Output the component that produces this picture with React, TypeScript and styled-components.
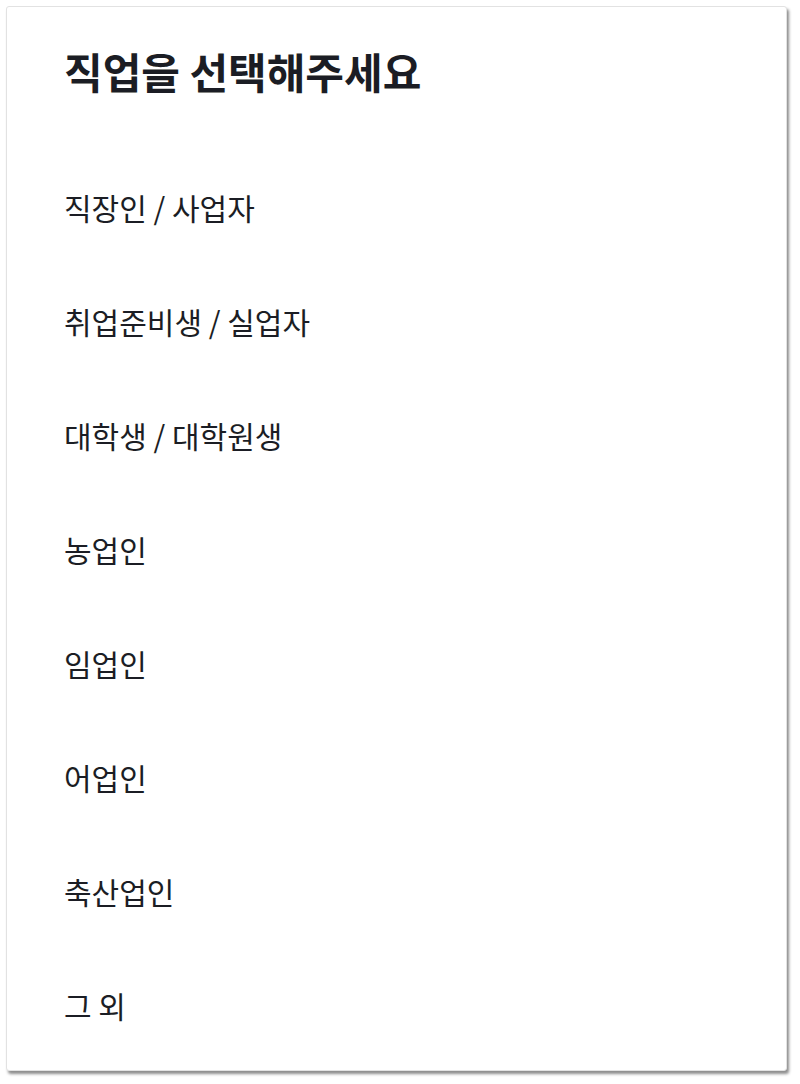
import React from "react";
import styled, { createGlobalStyle } from "styled-components";

const GlobalStyle = createGlobalStyle`
  html, body {
    margin: 0;
    padding: 0;
    background: #ffffff;
  }
  body {
    font-family: "Noto Sans CJK KR", "Noto Sans", sans-serif;
    color: #1b1d24;
  }
`;

const Page = styled.div`
  padding: 6px 13px 13px 6px;
`;

const Card = styled.div`
  width: 781px;
  height: 1065px;
  box-sizing: border-box;
  background: #ffffff;
  border: 1px solid #e2e2e2;
  border-radius: 3px;
  box-shadow: 2px 3px 3px rgba(0, 0, 0, 0.45);
  padding: 0 0 8px 57px;
  display: flex;
  flex-direction: column;
`;

const Title = styled.h1`
  margin: 0;
  height: 144px;
  box-sizing: border-box;
  padding-bottom: 16px;
  display: flex;
  align-items: center;
  font-size: 42px;
  font-weight: 700;
  color: #1b1d24;
`;

const List = styled.ul`
  list-style: none;
  margin: 0;
  padding: 0;
`;

const Item = styled.li`
  height: 114px;
  display: flex;
  align-items: center;
  font-size: 30px;
  font-weight: 400;
  color: #1b1d24;
  cursor: pointer;
`;

const jobs = [
  "직장인 / 사업자",
  "취업준비생 / 실업자",
  "대학생 / 대학원생",
  "농업인",
  "임업인",
  "어업인",
  "축산업인",
  "그 외",
];

export default function App() {
  return (
    <>
      <GlobalStyle />
      <Page>
        <Card>
          <Title>직업을 선택해주세요</Title>
          <List>
            {jobs.map((job) => (
              <Item key={job}>{job}</Item>
            ))}
          </List>
        </Card>
      </Page>
    </>
  );
}
